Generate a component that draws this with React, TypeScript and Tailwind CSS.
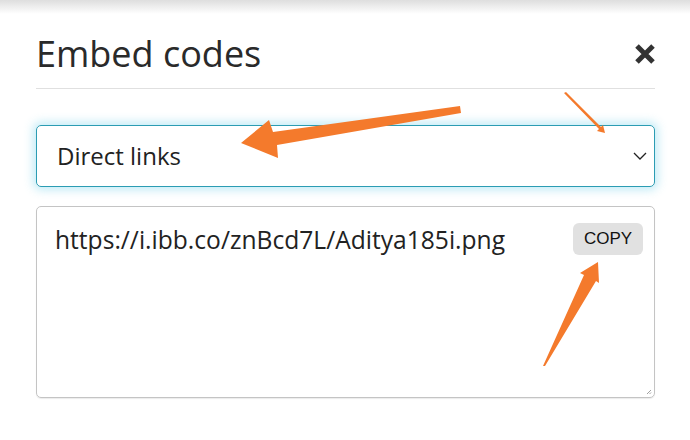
import React from "react";

export default function App() {
  return (
    <div className="relative w-[690px] h-[440px] bg-white overflow-hidden" style={{ fontFamily: '"Open Sans", sans-serif' }}>
      <div className="h-[14px] bg-gradient-to-b from-[#dedede] to-white" />
      <div className="px-[36px] pr-[35px]">
        <div className="flex items-center justify-between h-[60px] mt-[10px]">
          <h1 className="text-[36px] leading-none text-[#2a2a2a] font-normal">Embed codes</h1>
          <svg width="22" height="22" viewBox="0 0 22 22" className="mr-[-1px]">
            <path d="M3 3 L19 19 M19 3 L3 19" stroke="#333" strokeWidth="5" strokeLinecap="butt" />
          </svg>
        </div>
        <div className="mt-[4px] h-px bg-[#e0e0e0]" />
        <div className="mt-[36px] h-[62px] rounded-[5px] border border-[#2b9cb3] shadow-[0_0_10px_3px_rgba(120,210,235,0.45)] flex items-center justify-between pl-[20px] pr-[7px]">
          <span className="text-[24px] text-[#222]">Direct links</span>
          <svg width="14" height="10" viewBox="0 0 14 10">
            <path d="M1 2 L7 8 L13 2" stroke="#222" strokeWidth="1.3" fill="none" />
          </svg>
        </div>
        <div className="relative mt-[19px] h-[192px] rounded-[5px] border border-[#c4c4c4] shadow-[0_1px_1px_rgba(0,0,0,0.08)] flex items-start justify-between pl-[18px] pr-[11px] pt-[15px]">
          <span className="text-[24.6px] leading-[36px] text-[#222]">https://i.ibb.co/znBcd7L/Aditya185i.png</span>
          <span className="rounded-[6px] bg-[#e1e1e1] h-[32px] w-[70px] mt-[1px] flex items-center justify-center text-[17px] text-[#111]" style={{ fontFamily: '"Liberation Sans", Arial, sans-serif' }}>COPY</span>
          <svg className="absolute right-[2px] bottom-[2px]" width="6" height="6" viewBox="0 0 6 6">
            <path d="M1 5 L5 1 M3.5 5 L5 3.5" stroke="#888" strokeWidth="0.8" />
          </svg>
        </div>
      </div>
      <svg className="absolute inset-0 pointer-events-none" width="690" height="440" viewBox="0 0 690 440">
        <polygon points="460,106 461,113 277,145 278,158 241,143 269,120 273,132" fill="#f47a2c" />
        <polygon points="564,93 566,92 601,127 603,125 605,133 597,131 599,129" fill="#f47a2c" />
        <polygon points="543,366 545,366 596,281 599,283 598,262 580,273 584,275" fill="#f47a2c" />
      </svg>
    </div>
  );
}
